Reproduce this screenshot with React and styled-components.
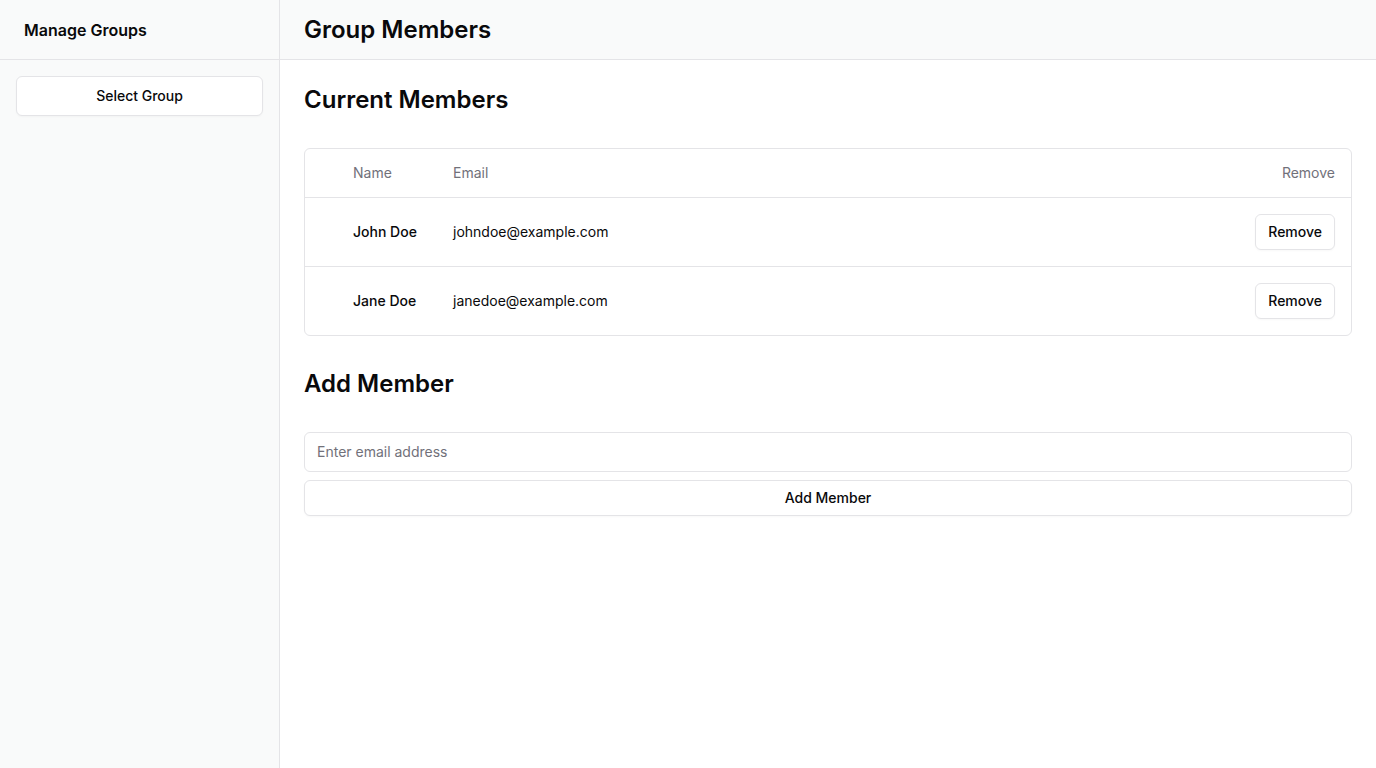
import React from "react";
import styled, { createGlobalStyle } from "styled-components";

const GlobalStyle = createGlobalStyle`
  * { box-sizing: border-box; }
  body {
    margin: 0;
    font-family: Inter, "Noto Sans", sans-serif;
    color: #09090b;
    background: #ffffff;
  }
`;

const Layout = styled.div`
  display: flex;
  height: 100vh;
  width: 100%;
`;

const Sidebar = styled.aside`
  width: 280px;
  flex-shrink: 0;
  background: #f9fafa;
  border-right: 1px solid #e4e4e7;
  display: flex;
  flex-direction: column;
`;

const SidebarHeader = styled.div`
  height: 60px;
  display: flex;
  align-items: center;
  padding: 0 24px;
  border-bottom: 1px solid #e4e4e7;
  font-size: 16px;
  font-weight: 600;
`;

const SidebarBody = styled.div`
  padding: 16px;
`;

const Button = styled.button`
  font-family: inherit;
  font-size: 14px;
  font-weight: 500;
  color: #09090b;
  background: #ffffff;
  border: 1px solid #e4e4e7;
  border-radius: 6px;
  height: ${(p) => (p.$tall ? "40px" : "36px")};
  padding: ${(p) => (p.$block ? "0 12px 2px" : "0 12px")};
  width: ${(p) => (p.$block ? "100%" : "auto")};
  cursor: pointer;
  box-shadow: 0 1px 2px rgba(0, 0, 0, 0.03);
`;

const Main = styled.main`
  flex: 1;
  display: flex;
  flex-direction: column;
`;

const MainHeader = styled.header`
  height: 60px;
  display: flex;
  align-items: center;
  padding: 0 24px;
  background: #f9fafa;
  border-bottom: 1px solid #e4e4e7;
`;

const PageTitle = styled.h1`
  margin: 0;
  font-size: 24px;
  font-weight: 600;
  line-height: 32px;
`;

const Content = styled.div`
  padding: 24px;
  display: flex;
  flex-direction: column;
`;

const SectionTitle = styled.h2`
  margin: 0 0 32px;
  font-size: 24px;
  font-weight: 600;
  line-height: 32px;
`;

const Card = styled.div`
  border: 1px solid #e4e4e7;
  border-radius: 6px;
  margin-bottom: 32px;
  overflow: hidden;
`;

const Table = styled.table`
  width: 100%;
  border-collapse: collapse;
  font-size: 14px;
`;

const Th = styled.th`
  height: 48px;
  padding: 0 16px;
  text-align: ${(p) => p.$align || "left"};
  font-weight: 400;
  color: #71717a;
  width: ${(p) => p.$w || "auto"};
`;

const Tr = styled.tr`
  border-top: 1px solid #e4e4e7;
`;

const Td = styled.td`
  height: 69px;
  padding: 0 16px;
  text-align: ${(p) => p.$align || "left"};
  font-weight: ${(p) => (p.$bold ? 500 : 400)};
`;

const Form = styled.div`
  display: flex;
  flex-direction: column;
  gap: 8px;
`;

const Input = styled.input`
  height: 40px;
  width: 100%;
  font-family: inherit;
  font-size: 14px;
  padding: 0 12px 2px;
  border: 1px solid #e4e4e7;
  border-radius: 6px;
  outline: none;
  color: #09090b;
  &::placeholder { color: #71717a; }
`;

const members = [
  { name: "John Doe", email: "johndoe@example.com" },
  { name: "Jane Doe", email: "janedoe@example.com" },
];

const App = () => {
  return (
    <>
      <GlobalStyle />
      <Layout>
        <Sidebar>
          <SidebarHeader>Manage Groups</SidebarHeader>
          <SidebarBody>
            <Button $block $tall>Select Group</Button>
          </SidebarBody>
        </Sidebar>
        <Main>
          <MainHeader>
            <PageTitle>Group Members</PageTitle>
          </MainHeader>
          <Content>
            <SectionTitle>Current Members</SectionTitle>
            <Card>
              <Table>
                <thead>
                  <tr>
                    <Th $w="32px" />
                    <Th $w="100px">Name</Th>
                    <Th>Email</Th>
                    <Th $align="right">Remove</Th>
                  </tr>
                </thead>
                <tbody>
                  {members.map((m) => (
                    <Tr key={m.email}>
                      <Td />
                      <Td $bold>{m.name}</Td>
                      <Td>{m.email}</Td>
                      <Td $align="right">
                        <Button>Remove</Button>
                      </Td>
                    </Tr>
                  ))}
                </tbody>
              </Table>
            </Card>
            <SectionTitle>Add Member</SectionTitle>
            <Form>
              <Input placeholder="Enter email address" />
              <Button $block>Add Member</Button>
            </Form>
          </Content>
        </Main>
      </Layout>
    </>
  );
};

export default App;
